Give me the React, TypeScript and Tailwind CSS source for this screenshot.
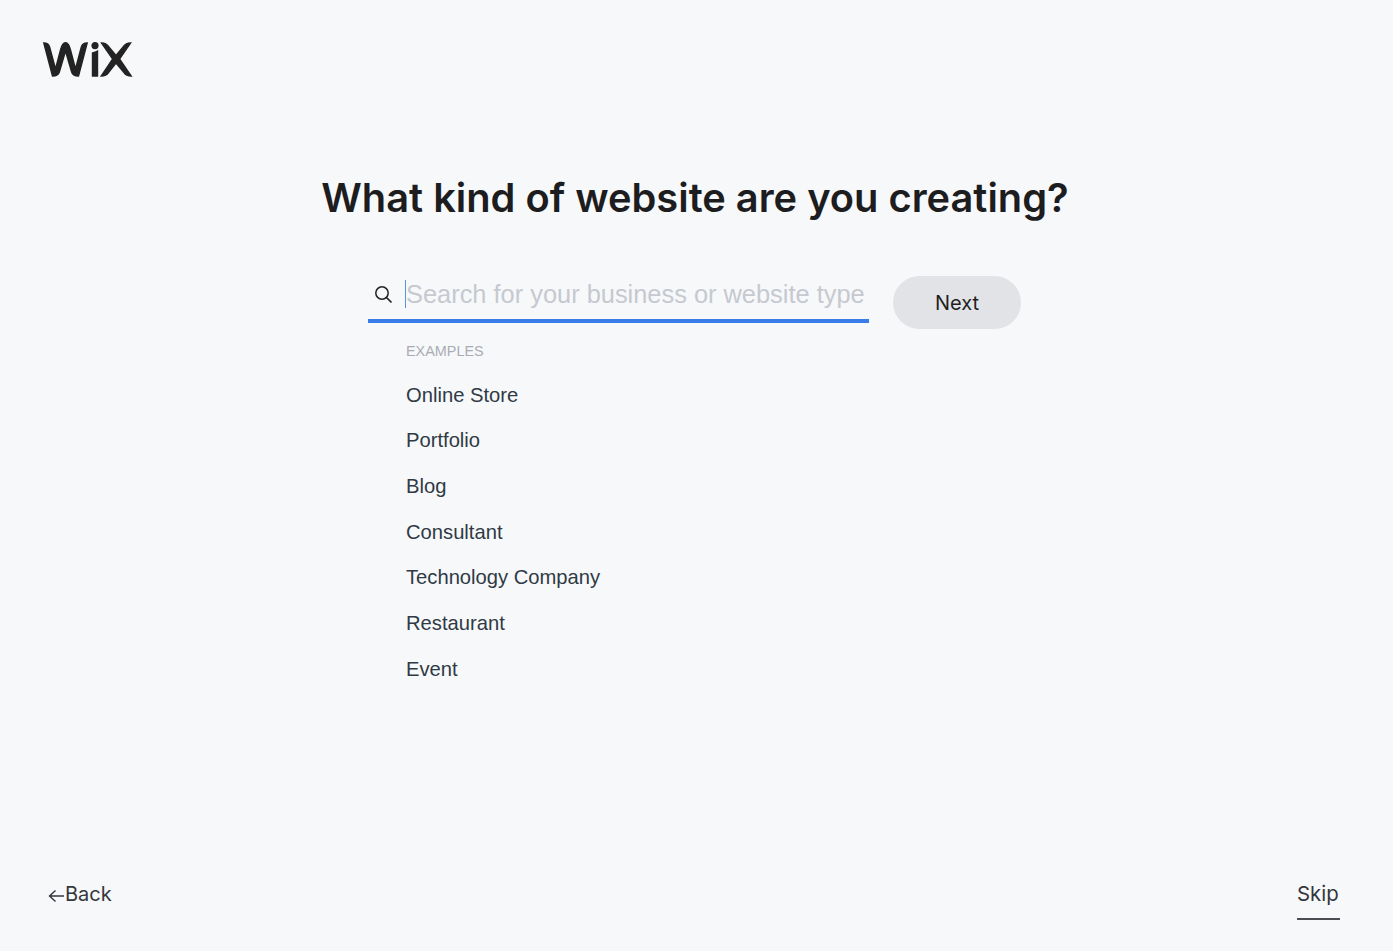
const EXAMPLES = ['Online Store', 'Portfolio', 'Blog', 'Consultant', 'Technology Company', 'Restaurant', 'Event']

function WixLogo() {
  return (
    <svg width="90" height="36" viewBox="0 0 90 36" fill="#232323" stroke="#232323" strokeWidth="1.4" aria-hidden="true">
      <path d="M0.8 1 C3 1 5.5 1.5 6.6 5 L12.5 27 L17.5 8 C18.6 3.5 20 0.8 22.5 0.8 C25 0.8 26.4 3.5 27.5 8 L32.5 27 L38.2 5.5 C39.2 1.5 41.5 1 44.2 1 L35.5 34 C32 34 29.5 33.5 28.5 29.5 L22.5 9 L16.5 29.5 C15.5 33.5 13 34 9.5 34 Z" />
      <circle cx="52" cy="3.6" r="2.9" />
      <path d="M49.5 11 C51 10.5 53 10 54.5 9 L54.5 34 L49.5 34 Z" />
      <path d="M58.5 1 C61.5 1 63.5 1.5 65.5 4.5 L73 13.5 L80.5 4.5 C82.5 1.5 85 1 87.6 1 L76.5 17 L88.2 34 C85 34 83 33.5 81 30.5 L73 21 L65.5 30.5 C63.5 33.5 61.5 34 58.2 34 L69.7 17 Z" />
    </svg>
  )
}

export default function App() {
  return (
    <div className="w-[1400px] h-[951px] bg-white font-['Inter',sans-serif] overflow-hidden">
      <div className="w-[1393px] h-full bg-[#f7f8fa] flex flex-col">
        <header className="pl-[43px] pt-[42px] h-[178px]">
          <WixLogo />
        </header>

        <h1 className="text-center text-[39.8px] leading-[40px] font-semibold text-[#1d1d1f] pr-[3px]">
          What kind of website are you creating?
        </h1>

        <main className="flex-1 flex items-start pl-[368px] pt-[56px]">
          <div className="w-[501px]">
            <div className="flex items-center h-[49px] border-b-[4px] border-[#3b7de8] pb-[6px]">
              <svg width="24" height="24" viewBox="0 0 24 24" className="ml-[3px]" fill="none" stroke="#222" aria-hidden="true">
                <circle cx="11" cy="11" r="6.2" strokeWidth="1.5" />
                <path d="M15.5 15.5L20.5 20.5" strokeWidth="1.7" />
              </svg>
              <div className="ml-[10px] h-[28px] w-px bg-[#5b93d8]" />
              <div className="text-[25.4px] leading-[30px] text-[#c6c9d0] font-['Liberation_Sans',sans-serif] whitespace-nowrap">
                Search for your business or website type
              </div>
            </div>
            <div className="pl-[38px] pt-[20px]">
              <div className="text-[14.4px] leading-[16px] text-[#a9acb3] font-['Liberation_Sans',sans-serif] mb-[13px]">
                EXAMPLES
              </div>
              {EXAMPLES.map((label) => (
                <div key={label} className="h-[45.67px] flex items-center text-[20.2px] text-[#2f3a45] font-['Liberation_Sans',sans-serif]">
                  {label}
                </div>
              ))}
            </div>
          </div>
          <button className="ml-[24px] mt-[2px] w-[128px] h-[53px] rounded-full bg-[#e2e3e6] text-[20px] text-[#1f1f1f]">
            Next
          </button>
        </main>

        <footer className="flex items-start justify-between pl-[48px] pr-[53px] pt-[4px] h-[75px]">
          <div className="flex items-center text-[20px] leading-[28px] text-[#34373d]">
            <svg width="17" height="14" viewBox="0 0 17 14" className="mt-[3px]" aria-hidden="true">
              <path d="M16 7H1.5M7.5 1.5L1.5 7l6 5.5" fill="none" stroke="#34373d" strokeWidth="1.4" />
            </svg>
            Back
          </div>
          <div className="text-[20.4px] leading-[28px] text-[#34373d] border-b-2 border-[#4a4d52] pb-[10px] w-[43px] whitespace-nowrap">
            Skip
          </div>
        </footer>
      </div>
    </div>
  )
}
